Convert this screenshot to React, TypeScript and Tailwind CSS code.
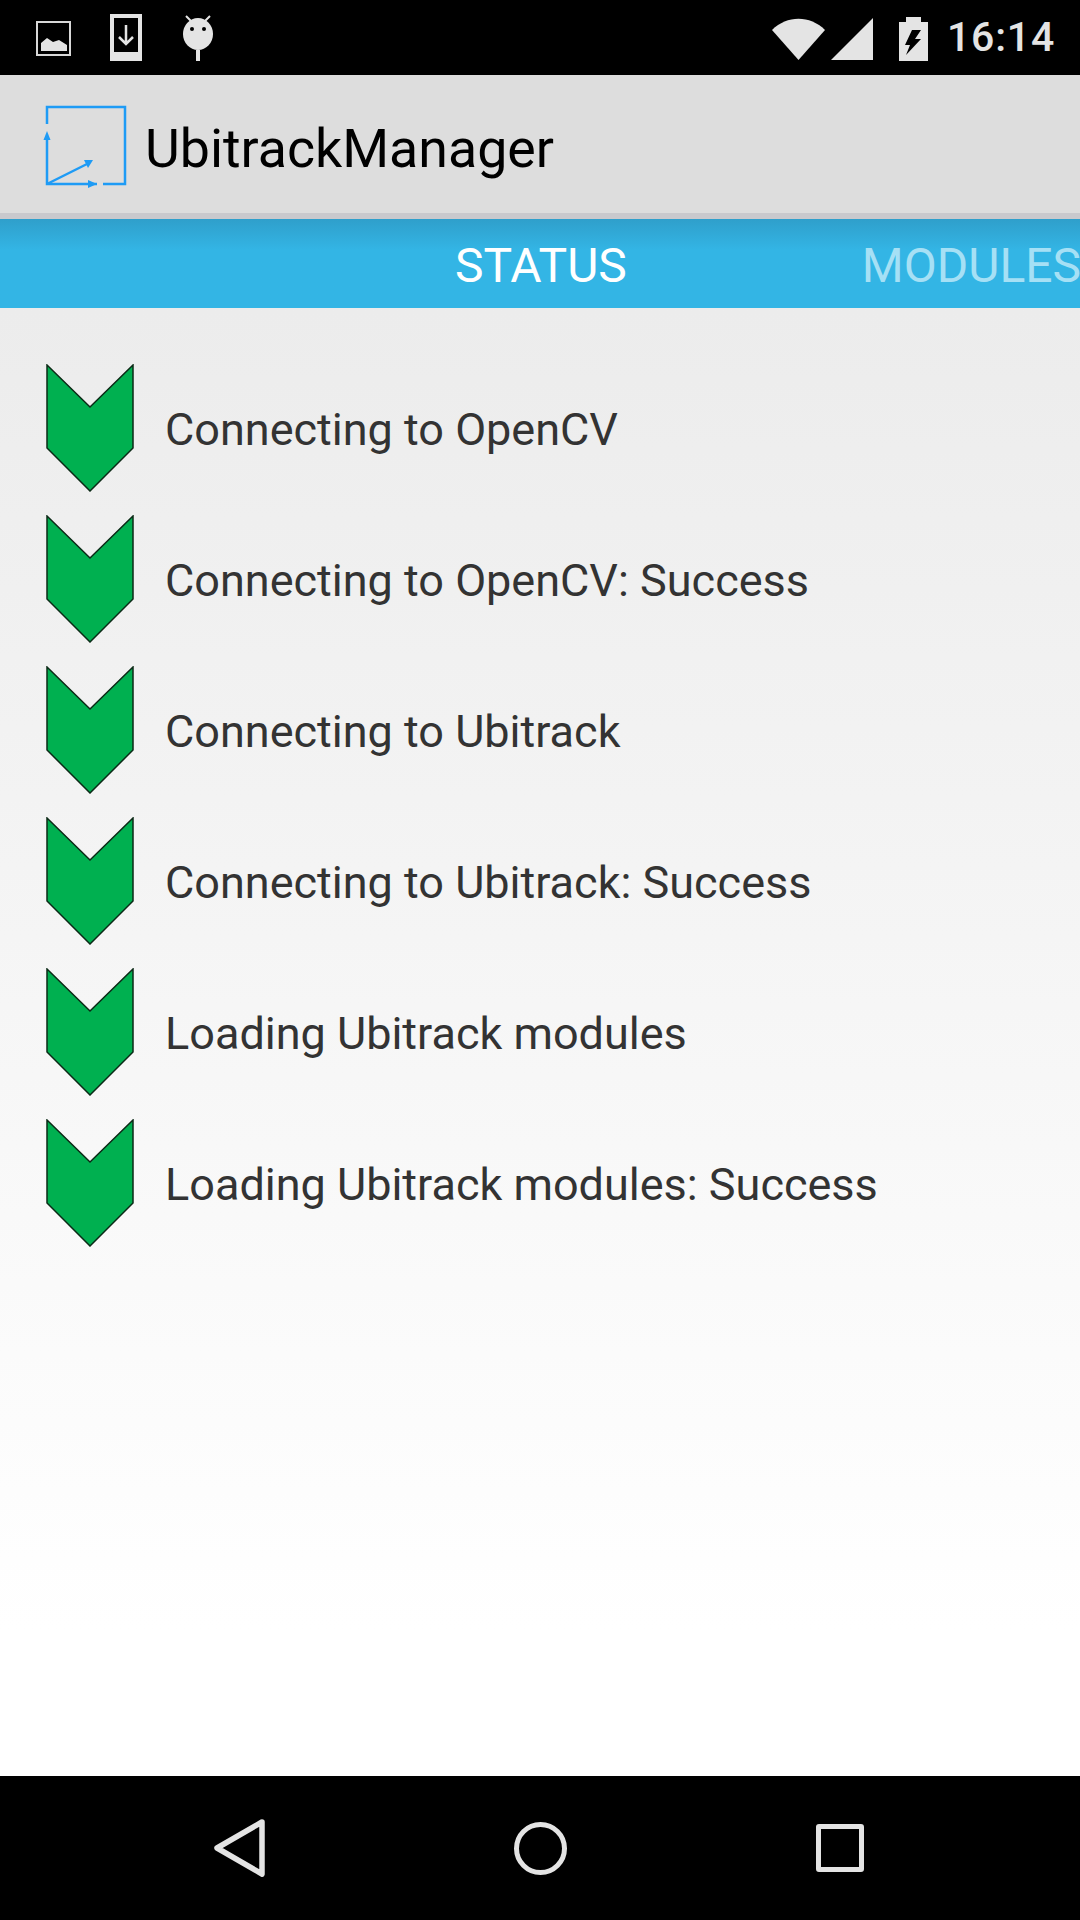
const rows = [
  'Connecting to OpenCV',
  'Connecting to OpenCV: Success',
  'Connecting to Ubitrack',
  'Connecting to Ubitrack: Success',
  'Loading Ubitrack modules',
  'Loading Ubitrack modules: Success',
]

const StatusBar = () => (
  <div className="flex h-[75px] items-center justify-between bg-black pl-[36px] pr-[25px] text-[#e4e4e4]">
    <div className="flex items-center">
      <svg width="36" height="36" viewBox="0 0 36 36" className="mt-[2px]">
        <rect x="1" y="1" width="33" height="33" fill="none" stroke="#d8d8d8" strokeWidth="2" />
        <path d="M5 30V22L11 17L17 21L23 19L31 24V30Z" fill="#e4e4e4" />
      </svg>
      <svg width="32" height="47" viewBox="0 0 32 47" className="ml-[38px]">
        <path d="M0 0H32V47H0ZM4 4V38H28V4Z" fill="#e4e4e4" fillRule="evenodd" />
        <path d="M16 11V28M9 23L16 30L23 23" fill="none" stroke="#e4e4e4" strokeWidth="2.500" />
      </svg>
      <svg width="30" height="46" viewBox="0 0 30 46" className="ml-[41px]">
        <path d="M3 1L8 6M27 1L22 6" stroke="#e4e4e4" strokeWidth="2" />
        <ellipse cx="15" cy="19" rx="15" ry="16" fill="#e4e4e4" />
        <circle cx="9" cy="14" r="2" fill="#000" />
        <circle cx="21" cy="14" r="2" fill="#000" />
        <rect x="13" y="35" width="4" height="11" fill="#e4e4e4" />
      </svg>
    </div>
    <div className="flex items-center">
      <svg width="54" height="42" viewBox="0 0 54 42" className="mt-[2px]">
        <path d="M0 12C15 -3 38 -3 53 12L26.500 42Z" fill="#e4e4e4" />
      </svg>
      <svg width="43" height="42" viewBox="0 0 43 42" className="ml-[5px] mt-[2px]">
        <path d="M0 42L42 0V42Z" fill="#e4e4e4" />
      </svg>
      <svg width="30" height="44" viewBox="0 0 30 44" className="ml-[25px] mt-[2px]">
        <path
          d="M7 0H22V5H29V44H0V5H7ZM13 13L6 28H11L7 38L22 22H16L22 13Z"
          fill="#e4e4e4"
          fillRule="evenodd"
        />
      </svg>
      <span className="ml-[18px] font-['Roboto',sans-serif] text-[41px] font-medium leading-none tracking-[0.8px]">
        16:14
      </span>
    </div>
  </div>
)

const ActionBar = () => (
  <div className="flex h-[144px] items-center border-b-[6px] border-[#c9c9cd] bg-[#dddddd] pl-[43px]">
    <svg width="84" height="84" viewBox="0 0 84 84" className="mt-[3px]">
      <path d="M4 20V3H82V80H60M4 36V80H54" fill="none" stroke="#1e9bf5" strokeWidth="2.500" />
      <path d="M4 80L44 60" stroke="#1e9bf5" strokeWidth="2.500" />
      <path d="M50 56L41 56L45 64Z" fill="#1e9bf5" />
      <path d="M4 27L0.500 36H7.500Z" fill="#1e9bf5" />
      <path d="M54 80L45 76V84Z" fill="#1e9bf5" />
    </svg>
    <span className="ml-[18px] mt-[10px] font-['Roboto',sans-serif] text-[53.700px] leading-none text-black">
      UbitrackManager
    </span>
  </div>
)

const Tabs = () => (
  <div className="flex h-[89px] items-center overflow-hidden bg-gradient-to-b from-[#2f9fcb] via-[#33b5e5] via-[35%] to-[#33b5e5] pl-[455px] pt-[4px] font-['Roboto',sans-serif] text-[48px] leading-none whitespace-nowrap">
    <span className="text-white">STATUS</span>
    <span className="ml-[235px] text-[#a6e0f5]">MODULES</span>
  </div>
)

const Chevron = () => (
  <svg width="88" height="128" viewBox="0 0 88 128" className="shrink-0">
    <path d="M1 1L44 43L87 1V84L44 127L1 84Z" fill="#00b050" stroke="#0b2a16" strokeWidth="1.500" />
  </svg>
)

export default function App() {
  return (
    <div className="flex h-[1920px] w-[1080px] flex-col overflow-hidden">
      <StatusBar />
      <ActionBar />
      <Tabs />
      <div className="flex flex-1 flex-col gap-[23px] bg-gradient-to-b from-[#ececec] to-white to-[90%] pl-[46px] pt-[56px]">
        {rows.map((row) => (
          <div key={row} className="flex items-center">
            <Chevron />
            <span className="ml-[31px] mt-[3px] font-['Roboto',sans-serif] text-[45px] leading-none text-[#333333]">
              {row}
            </span>
          </div>
        ))}
      </div>
      <div className="flex h-[144px] items-center bg-black pl-[213px]">
        <svg width="54" height="58" viewBox="0 0 54 58">
          <path d="M49 3L4 29L49 55Z" fill="none" stroke="#e4e4e4" strokeWidth="5.500" strokeLinejoin="round" />
        </svg>
        <span className="ml-[247px] h-[53px] w-[53px] rounded-full border-[5px] border-[#e4e4e4]" />
        <span className="ml-[249px] h-[48px] w-[48px] rounded-[3px] border-[5px] border-[#e4e4e4]" />
      </div>
    </div>
  )
}
